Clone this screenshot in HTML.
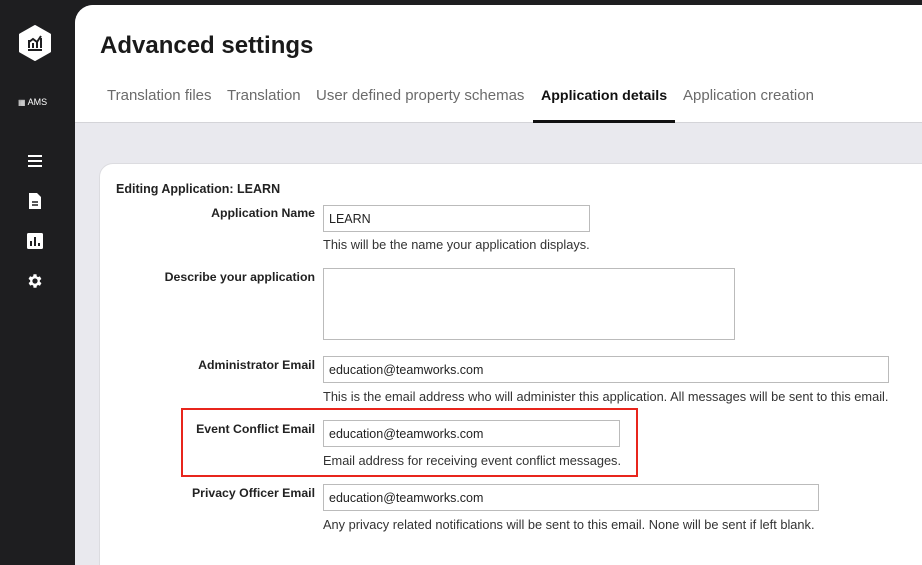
<!DOCTYPE html>
<html><head><meta charset="utf-8"><style>
*{box-sizing:border-box;margin:0;padding:0}
body{width:922px;height:541px;overflow:hidden;background:#1e1e20;font-family:"Liberation Sans",sans-serif;position:relative}
.side{position:absolute;left:0;top:0;width:75px;height:541px;background:#1e1e20}
.main{position:absolute;left:75px;top:5px;width:860px;height:560px;background:#e9e9ee;border-top-left-radius:18px;overflow:hidden}
.head{position:absolute;left:0;top:0;width:100%;height:118px;background:#fff;border-bottom:1px solid #d4d4d8}
h1{position:absolute;left:25px;top:27px;font-size:24px;font-weight:bold;color:#1a1a1a}
.tab{position:absolute;top:82px;font-size:15px;color:#6b6b6b}
.tab.a{color:#111;font-weight:bold;font-size:14.2px;top:83px}
.ul{position:absolute;left:458px;top:115px;width:142px;height:3px;background:#111}
.card{position:absolute;left:24px;top:158px;width:860px;height:420px;background:#fff;border-radius:14px;border:1px solid #dcdce0}
.lbl{position:absolute;right:643px;font-size:12.3px;font-weight:bold;color:#222;text-align:right;white-space:nowrap}
.inp{position:absolute;left:223px;height:27px;border:1px solid #bbb;background:#fff;font-size:12.5px;color:#222;padding:6px 5px}
.hint{position:absolute;left:223px;font-size:12.8px;color:#333;white-space:nowrap}
.ic{position:absolute;left:26px;width:18px;height:18px}
</style></head><body>
<div class="side">
<svg style="position:absolute;left:18px;top:25px" width="34" height="36" viewBox="0 0 34 36"><polygon points="17,1 32,9.5 32,26.5 17,35 2,26.5 2,9.5" fill="#fff" stroke="#fff" stroke-linejoin="round" stroke-width="2"/><path d="M10 25h14M11 23v-8M15 23v-5M19 23v-7M23 23v-10M11 17l4-3 4 3 4-6" stroke="#1e1e20" stroke-width="2" fill="none"/></svg>
<div style="position:absolute;left:18px;top:97px;font-size:9px;color:#fff"><span style="font-size:8px">▦</span> AMS</div>
<svg class="ic" style="top:152px" viewBox="0 0 18 18"><path d="M2 4h14M2 9h14M2 14h14" stroke="#fff" stroke-width="2"/></svg>
<svg class="ic" style="top:192px" viewBox="0 0 18 18"><path d="M3 1h8l4 4v12H3z" fill="#fff"/><path d="M6 10h6M6 13h6" stroke="#1e1e20" stroke-width="1.5"/></svg>
<svg class="ic" style="top:232px" viewBox="0 0 18 18"><rect x="1" y="1" width="16" height="16" rx="1.5" fill="#fff"/><path d="M5 14V9M9 14V5M13 14v-3" stroke="#1e1e20" stroke-width="2"/></svg>
<svg class="ic" style="top:272px" viewBox="0 0 24 24"><path fill="#fff" d="M19.4 13a7.5 7.5 0 0 0 0-2l2.1-1.6-2-3.5-2.5 1a7 7 0 0 0-1.7-1L15 3h-4l-.4 2.7a7 7 0 0 0-1.7 1l-2.5-1-2 3.5L6.6 11a7.5 7.5 0 0 0 0 2l-2.1 1.6 2 3.5 2.5-1a7 7 0 0 0 1.7 1L11 21h4l.4-2.7a7 7 0 0 0 1.7-1l2.5 1 2-3.5zM13 15.5a3.5 3.5 0 1 1 0-7 3.5 3.5 0 0 1 0 7z" transform="translate(-1 0)"/></svg>
</div>
<div class="main">
<div class="head">
<h1>Advanced settings</h1>
<div class="tab" style="left:32px">Translation files</div>
<div class="tab" style="left:152px">Translation</div>
<div class="tab" style="left:241px">User defined property schemas</div>
<div class="tab a" style="left:466px">Application details</div>
<div class="tab" style="left:608px">Application creation</div>
<div class="ul"></div>
</div>
<div class="card">
<div style="position:absolute;left:16px;top:18px;font-size:12.5px;font-weight:bold;color:#222">Editing Application: LEARN</div>
<div class="lbl" style="top:42px">Application Name</div>
<div class="inp" style="top:41px;width:267px">LEARN</div>
<div class="hint" style="top:73px">This will be the name your application displays.</div>
<div class="lbl" style="top:106px">Describe your application</div>
<div class="inp" style="top:104px;width:412px;height:72px"></div>
<div class="lbl" style="top:194px">Administrator Email</div>
<div class="inp" style="top:192px;width:566px">education@teamworks.com</div>
<div class="hint" style="top:225px">This is the email address who will administer this application. All messages will be sent to this email.</div>
<div style="position:absolute;left:81px;top:244px;width:457px;height:69px;border:2px solid #e8251c"></div>
<div class="lbl" style="top:258px">Event Conflict Email</div>
<div class="inp" style="top:256px;width:297px">education@teamworks.com</div>
<div class="hint" style="top:289px">Email address for receiving event conflict messages.</div>
<div class="lbl" style="top:322px">Privacy Officer Email</div>
<div class="inp" style="top:320px;width:496px">education@teamworks.com</div>
<div class="hint" style="top:353px">Any privacy related notifications will be sent to this email. None will be sent if left blank.</div>
</div>
</div>
</body></html>
